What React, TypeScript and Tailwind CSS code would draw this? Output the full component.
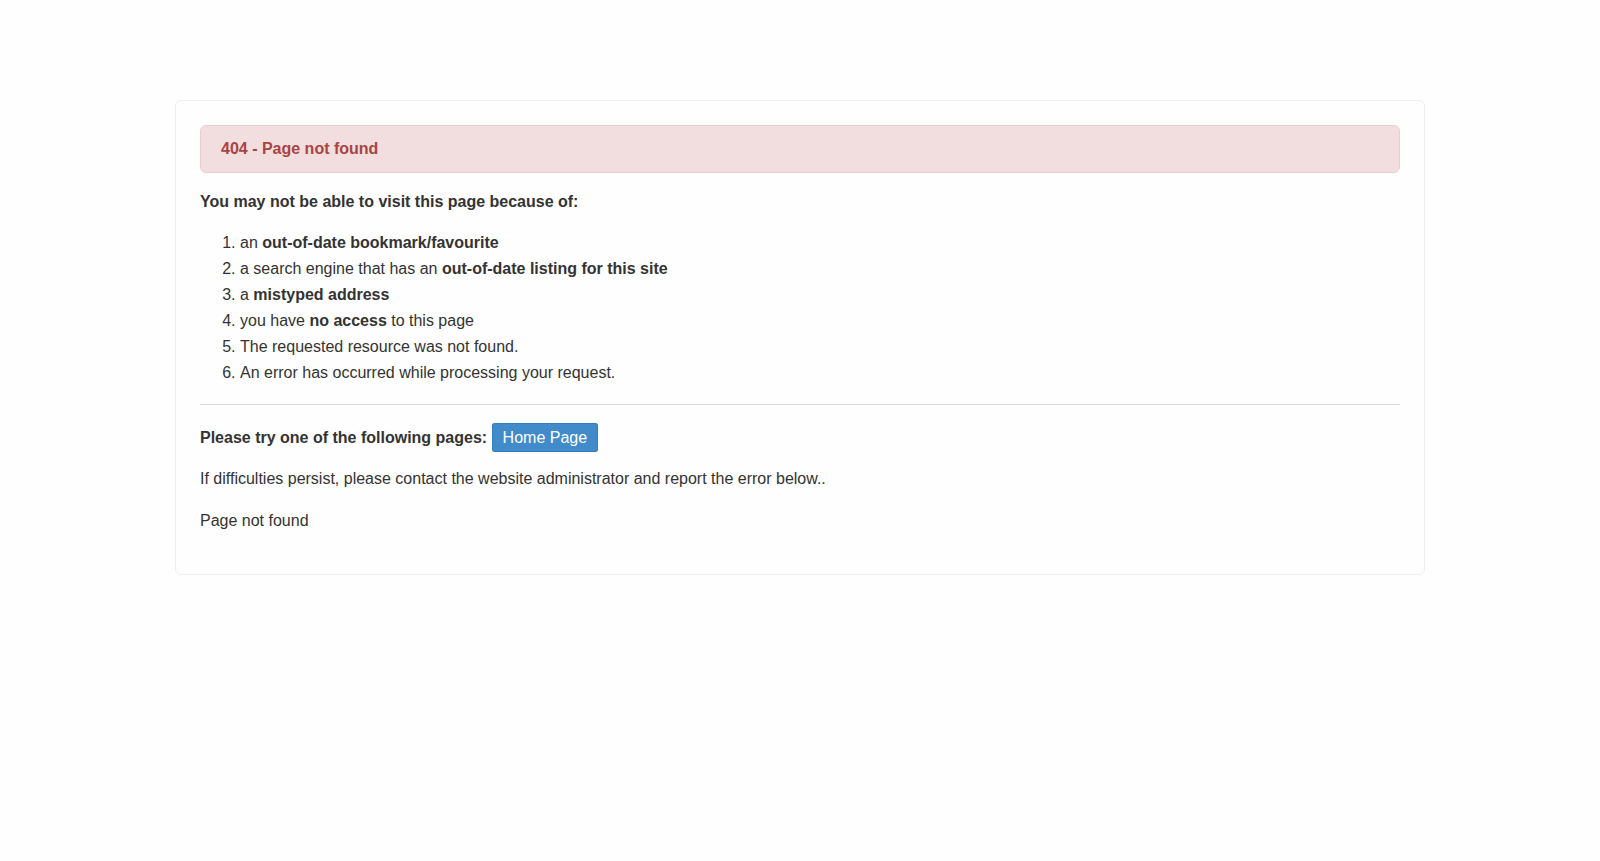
import React from 'react';

const reasons: React.ReactNode[] = [
  <>an <strong>out-of-date bookmark/favourite</strong></>,
  <>a search engine that has an <strong>out-of-date listing for this site</strong></>,
  <>a <strong>mistyped address</strong></>,
  <>you have <strong>no access</strong> to this page</>,
  <>The requested resource was not found.</>,
  <>An error has occurred while processing your request.</>,
];

const App: React.FC = () => {
  return (
    <div className="min-h-screen bg-[#fefefe] pt-[100px] font-['Liberation_Sans',Arial,sans-serif] text-base leading-[26px] text-[#333333]">
      <main className="mx-auto max-w-[1250px] rounded-md border border-[#eeeeee] p-6">
        {/* Error banner */}
        <div role="alert" className="mb-4 rounded-md border border-[#ebccd1] bg-[#f2dede] px-5 py-[10px] text-[#a94442]">
          <h1 className="font-bold">404 - Page not found</h1>
        </div>

        <p className="mb-[15px] font-bold">You may not be able to visit this page because of:</p>
        <ol className="list-decimal pl-10">
          {reasons.map((reason, i) => (
            <li key={i}>{reason}</li>
          ))}
        </ol>

        <hr className="mt-[18px] mb-5 border-[#dddddd]" />

        <p className="mb-[15px]">
          <strong>Please try one of the following pages:</strong>{' '}
          <a href="/" className="rounded-[3px] border border-[#357ebd] bg-[#428bca] px-[10px] py-[5px] text-white">
            Home Page
          </a>
        </p>
        <p className="mb-4">If difficulties persist, please contact the website administrator and report the error below..</p>
        <p className="mb-4">Page not found</p>
      </main>
    </div>
  );
};

export default App;
